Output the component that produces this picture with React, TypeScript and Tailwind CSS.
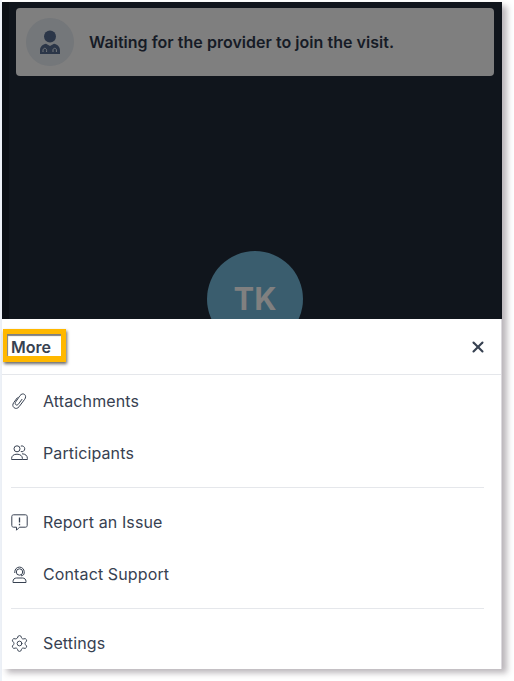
import { Settings, X } from "lucide-react";
import { ReactNode } from "react";

const font = { fontFamily: "Inter, sans-serif" };

function DoctorIcon() {
    return (
        <svg width="22" height="24" viewBox="0 0 22 24" fill="none">
            <circle cx="11" cy="6.500" r="6" fill="#2b3648" />
            <path d="M1 24v-3.500c0-4 3-6.500 6-6.800L11 16l4-2.300c3 .3 6 2.800 6 6.800V24z" fill="#2b3648" />
            <path d="M4 22v-1.500c0-1.300.8-2.200 1.800-2.200s1.800.9 1.800 2.200V22M14 22v-2c0-1 .8-1.700 1.700-1.700s1.700.7 1.700 1.700v2" stroke="#74777a" strokeWidth="1" />
        </svg>
    );
}

function PaperclipIcon() {
    return (
        <svg width="17" height="18" viewBox="0 0 17 18" fill="none" stroke="#374151" strokeWidth="1">
            <path d="M6.500 5.500 2.800 10.500c-1.500 2-1.200 4 .3 5.200s3.500.9 5-1l5.500-7.300c1.300-1.700 1.400-3.800 0-4.900s-3.300-.6-4.600 1.100L4.800 9.800c-.8 1.100-.8 2.200 0 2.900s1.900.4 2.700-.7l3.700-5" />
        </svg>
    );
}

function ParticipantsIcon() {
    return (
        <svg width="17" height="16" viewBox="0 0 17 16" fill="none" stroke="#374151" strokeWidth="1">
            <circle cx="6" cy="3.800" r="3" />
            <path d="M9.800 1.100a2.900 2.900 0 1 1 0 5.400" />
            <path d="M.6 14.500v-1c0-2.600 2-4.300 5.400-4.300s5.400 1.700 5.400 4.300v1z" />
            <path d="M11 8.800c3.400 0 5.400 1.900 5.400 4.700v1h-5" />
        </svg>
    );
}

function ReportIcon() {
    return (
        <svg width="17" height="17" viewBox="0 0 17 17" fill="none" stroke="#374151" strokeWidth="1">
            <path d="M2.500.8h12c1 0 1.700.7 1.700 1.700v9c0 1-.7 1.700-1.700 1.700H8.500l-3 3v-3h-3c-1 0-1.700-.7-1.700-1.700v-9c0-1 .7-1.700 1.700-1.700z" />
            <path d="M8.500 3.500v5M8.500 9.800v1.400" strokeWidth="1.300" />
        </svg>
    );
}

function SupportIcon() {
    return (
        <svg width="17" height="17" viewBox="0 0 17 17" fill="none" stroke="#374151" strokeWidth="1">
            <circle cx="8.500" cy="6" r="3.200" />
            <path d="M3.800 7V5.800a4.700 4.700 0 0 1 9.400 0V7" />
            <path d="M13.200 7c0 1.500-1.200 2.800-3.200 2.800" />
            <path d="M2 16.500v-1c0-2.200 1.500-3.500 3.500-3.500h6c2 0 3.500 1.300 3.500 3.500v1z" />
        </svg>
    );
}

function MenuItem({ icon, label }: { icon: ReactNode; label: string }) {
    return (
        <div className="flex items-center h-[52px] pl-[9px]">
            <div className="w-[32px] flex items-center">{icon}</div>
            <span className="text-[16px] tracking-[0.12px] text-[#374151]">{label}</span>
        </div>
    );
}

export default function App() {
    return (
        <div className="w-[514px] h-[681px] bg-white border-l-2 border-l-[#eef2f8] pt-[2px]" style={font}>
            <div className="w-[500px] h-[667px] flex flex-col bg-white shadow-[5px_4px_6px_rgba(60,50,60,0.35)]">
                {/* video area */}
                <div className="h-[317px] shrink-0 overflow-hidden bg-[#10151c] border-l-[7px] border-l-[#0b0f15]">
                    <div className="ml-[7px] mr-[8px] mt-[6px] h-[68px] rounded bg-[#7f7f7f] flex items-center pl-[10px] gap-[15px]">
                        <div className="w-[48px] h-[48px] rounded-full bg-[#74777a] flex items-center justify-center">
                            <DoctorIcon />
                        </div>
                        <span className="text-[16px] tracking-[0.03px] font-semibold text-[#161b26]">Waiting for the provider to join the visit.</span>
                    </div>
                    <div className="mt-[175px] ml-[198px] w-[96px] h-[96px] rounded-full bg-[#3a5d6e] flex items-center justify-center">
                        <span className="text-[31px] font-bold text-[#808080]">TK</span>
                    </div>
                </div>

                {/* more sheet */}
                <div className="flex-1 border-r border-r-[#dcd9de]">
                    <div className="h-[56px] flex items-center justify-between border-b border-b-[#e5e7eb] pl-[1px] pr-[14px]">
                        <div className="w-[63px] h-[33px] mb-[2px] border-solid border-t-[5px] border-b-[6px] border-l-4 border-r-[5px] border-[#ffb800] shadow-[1px_2px_3px_rgba(0,0,0,0.6)]">
                            <div className="h-full pl-[4px] pt-[5px] shadow-[inset_1px_2px_1px_rgba(0,0,0,0.5)]">
                                <span className="block text-[16px] leading-[16px] font-semibold text-[#374151]">More</span>
                            </div>
                        </div>
                        <X size={18} color="#374151" strokeWidth={2.75} />
                    </div>
                    <MenuItem icon={<PaperclipIcon />} label="Attachments" />
                    <MenuItem icon={<ParticipantsIcon />} label="Participants" />
                    <div className="h-px bg-[#e5e7eb] ml-[9px] mr-[17px] my-[8px]" />
                    <MenuItem icon={<ReportIcon />} label="Report an Issue" />
                    <MenuItem icon={<SupportIcon />} label="Contact Support" />
                    <div className="h-px bg-[#e5e7eb] ml-[9px] mr-[17px] my-[8px]" />
                    <MenuItem icon={<Settings size={19} color="#374151" strokeWidth={1.2} className="-ml-[1px]" />} label="Settings" />
                </div>
            </div>
        </div>
    );
}
